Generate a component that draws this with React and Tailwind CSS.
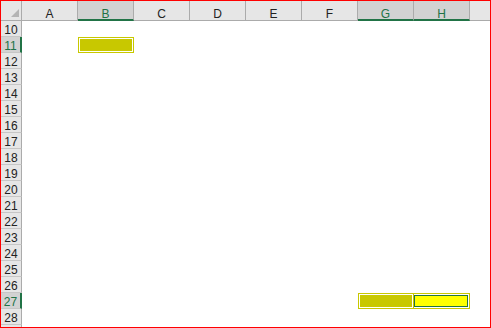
import React from 'react';

const COLS = ['A', 'B', 'C', 'D', 'E', 'F', 'G', 'H'];
const ROWS = [10, 11, 12, 13, 14, 15, 16, 17, 18, 19, 20, 21, 22, 23, 24, 25, 26, 27, 28];

const SELECTED_COLS = ['B', 'G', 'H'];
const SELECTED_ROWS = [11, 27];

// filled cells keyed by "COL:ROW"
const FILLS = {
  'B:11': { fill: 'bg-[#c8c800]' },
  'G:27': { fill: 'bg-[#c8c800]' },
  'H:27': { fill: 'bg-[#ffff00]', active: true, noLeft: true },
};

function CornerCell() {
  return (
    <div className="w-[21px] h-full shrink-0 bg-[#e6e6e6] border-r border-b border-[#ababab] box-border relative">
      <svg width="21" height="20" className="absolute left-0 top-0">
        <polygon points="10,16 18,16 18,8" fill="#b4b4b4" />
      </svg>
    </div>
  );
}

function ColumnHeader({ label }) {
  const selected = SELECTED_COLS.includes(label);
  return (
    <div
      className={
        selected
          ? 'w-[56px] h-full shrink-0 box-border bg-[#d2d2d2] border-r border-[#ababab] border-b-2 border-b-[#217346] text-[#217346] text-center pt-[7px] leading-[12px]'
          : 'w-[56px] h-full shrink-0 box-border bg-[#e6e6e6] border-r border-b border-[#ababab] text-[#222] text-center pt-[7px] leading-[12px]'
      }
    >
      {label}
    </div>
  );
}

function RowHeader({ n }) {
  const selected = SELECTED_ROWS.includes(n);
  return (
    <div
      className={
        selected
          ? 'w-[21px] h-full shrink-0 box-border bg-[#d2d2d2] border-r-2 border-r-[#217346] border-b border-b-[#c6c6c6] text-[#217346] text-center leading-[19px]'
          : 'w-[21px] h-full shrink-0 box-border bg-[#e6e6e6] border-r border-r-[#ababab] border-b border-b-[#c6c6c6] text-[#222] text-center leading-[19px]'
      }
    >
      {n}
    </div>
  );
}

function Cell({ col, row }) {
  const f = FILLS[`${col}:${row}`];
  if (!f) return <div className="w-[56px] h-full shrink-0" />;
  return (
    <div
      className={
        f.noLeft
          ? 'w-[56px] h-full shrink-0 box-border border border-l-0 border-[#c8c800] bg-white p-[1px] pl-0'
          : 'w-[56px] h-full shrink-0 box-border border border-[#c8c800] bg-white p-[1px]'
      }
    >
      {f.active ? (
        <div className={`w-full h-full border border-[#217346] ${f.fill}`} />
      ) : (
        <div className={`w-full h-full ${f.fill}`} />
      )}
    </div>
  );
}

export default function App() {
  return (
    <div className="w-[491px] h-[328px] box-border border border-[#ff0000] bg-white overflow-hidden font-['Liberation_Sans',Arial,sans-serif] text-[12px]">
      {/* column letters */}
      <div className="flex h-[20px]">
        <CornerCell />
        {COLS.map((c) => (
          <ColumnHeader key={c} label={c} />
        ))}
        <div className="flex-1 h-full box-border bg-[#e6e6e6] border-b border-[#ababab]" />
      </div>

      {/* sheet rows */}
      {ROWS.map((r) => (
        <div key={r} className="flex h-[16px]">
          <RowHeader n={r} />
          {COLS.map((c) => (
            <Cell key={c} col={c} row={r} />
          ))}
          <div className="flex-1" />
        </div>
      ))}

      {/* top sliver of the next row header */}
      <div className="flex h-[16px]">
        <div className="w-[21px] h-full shrink-0 box-border bg-[#e6e6e6] border-r border-[#ababab]" />
      </div>
    </div>
  );
}
